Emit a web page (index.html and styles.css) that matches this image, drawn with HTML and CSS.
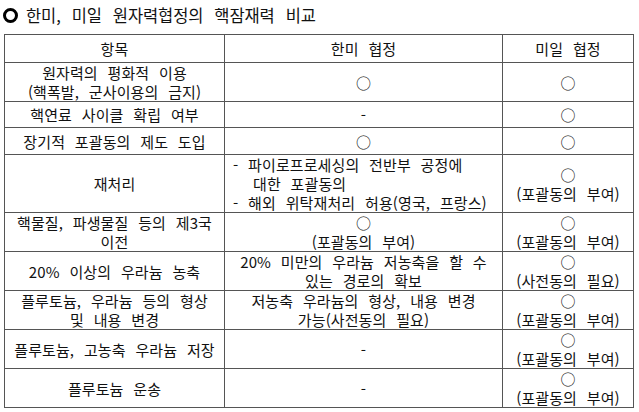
FILE: index.html
```html
<!DOCTYPE html>
<html lang="ko">
<head>
<meta charset="utf-8">
<title>한미, 미일 원자력협정의 핵잠재력 비교</title>
<link rel="stylesheet" href="styles.css">
</head>
<body>
<h1 class="title"><span class="bullet"></span><span class="title-text">한미, 미일 원자력협정의 핵잠재력 비교</span></h1>
<table class="cmp">
  <colgroup>
    <col class="c1"><col class="c2"><col class="c3">
  </colgroup>
  <tr class="r-head"><th>항목</th><th>한미 협정</th><th>미일 협정</th></tr>
  <tr class="r-two"><td>원자력의 평화적 이용<br>(핵폭발, 군사이용의 금지)</td><td>○</td><td>○</td></tr>
  <tr class="r-one"><td>핵연료 사이클 확립 여부</td><td>-</td><td>○</td></tr>
  <tr class="r-one b"><td>장기적 포괄동의 제도 도입</td><td>○</td><td>○</td></tr>
  <tr class="r-three"><td>재처리</td><td class="list"><div class="li">- 파이로프로세싱의 전반부 공정에<br>대한 포괄동의</div><div class="li">- 해외 위탁재처리 허용(영국, 프랑스)</div></td><td>○<br>(포괄동의 부여)</td></tr>
  <tr class="r-two"><td>핵물질, 파생물질 등의 제3국<br>이전</td><td>○<br>(포괄동의 부여)</td><td>○<br>(포괄동의 부여)</td></tr>
  <tr class="r-two"><td>20% 이상의 우라늄 농축</td><td>20% 미만의 우라늄 저농축을 할 수<br>있는 경로의 확보</td><td>○<br>(사전동의 필요)</td></tr>
  <tr class="r-two s"><td>플루토늄, 우라늄 등의 형상<br>및 내용 변경</td><td>저농축 우라늄의 형상, 내용 변경<br>가능(사전동의 필요)</td><td>○<br>(포괄동의 부여)</td></tr>
  <tr class="r-two"><td>플루토늄, 고농축 우라늄 저장</td><td>-</td><td>○<br>(포괄동의 부여)</td></tr>
  <tr class="r-two"><td>플루토늄 운송</td><td>-</td><td>○<br>(포괄동의 부여)</td></tr>
</table>
</body>
</html>
```

FILE: styles.css
```css
html, body {
  margin: 0;
  padding: 0;
  background: #fff;
}
body {
  font-family: "Noto Sans CJK KR", "Noto Sans", sans-serif;
  color: #111;
}
.title {
  margin: 0;
  padding: 0 0 5px 3px;
  height: 34px;
  box-sizing: border-box;
  display: flex;
  align-items: center;
  font-weight: normal;
  font-size: 16.5px;
  line-height: 20px;
}
.bullet {
  display: inline-block;
  width: 9px;
  height: 9px;
  border: 3px solid #000;
  border-radius: 50%;
  margin-right: 8px;
  margin-top: 1px;
}
.title-text {
  letter-spacing: -0.1px;
  word-spacing: 6.5px;
}
.cmp {
  margin-left: 4px;
  border-collapse: collapse;
  table-layout: fixed;
  width: 630px;
  font-size: 15px;
  line-height: 19px;
  letter-spacing: 0.1px;
  word-spacing: 5.5px;
}
.c1 { width: 220px; }
.c2 { width: 278px; }
.c3 { width: 131px; }
.cmp th, .cmp td {
  border: 1px solid #555;
  padding: 0;
  text-align: center;
  vertical-align: middle;
  font-weight: normal;
}
.r-head { height: 28px; }
.r-one { height: 26px; }
.r-one.b { height: 27px; }
.r-two { height: 39px; }
.r-two.s { height: 37px; }
.r-three { height: 58px; }
.cmp td.list {
  text-align: left;
  padding-left: 8px;
}
.li {
  padding-left: 20px;
  text-indent: -20px;
}
```
